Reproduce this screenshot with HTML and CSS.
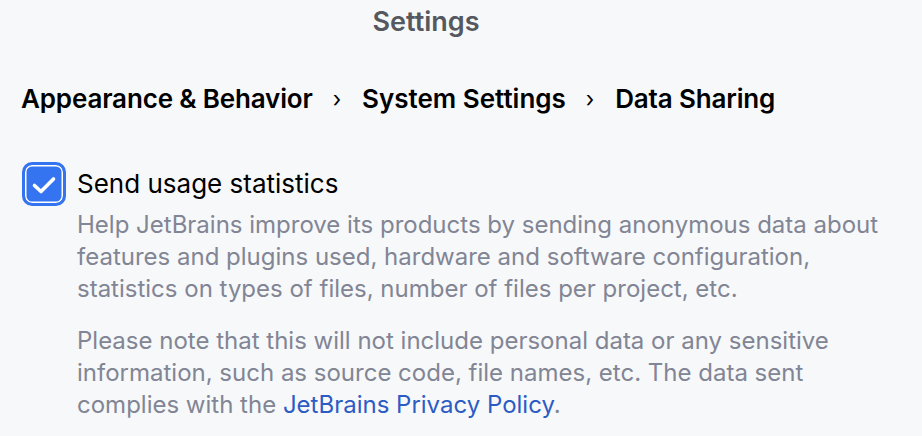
FILE: index.html
```html
<!DOCTYPE html>
<html>
<head>
<meta charset="utf-8">
<link rel="stylesheet" href="styles.css">
</head>
<body>
<div class="page">
  <header class="title">Settings</header>
  <nav class="crumbs">
    <span>Appearance &amp; Behavior</span>
    <span class="sep">›</span>
    <span class="mid">System Settings</span>
    <span class="sep">›</span>
    <span>Data Sharing</span>
  </nav>
  <div class="option">
    <div class="check">
      <svg width="38" height="38" viewBox="0 0 38 38"><path d="M9.5 20.5 L16 26.5 L28.5 14" fill="none" stroke="#fff" stroke-width="3.6" stroke-linecap="round" stroke-linejoin="round"/></svg>
    </div>
    <div class="body">
      <div class="label">Send usage statistics</div>
      <p class="desc first">Help JetBrains improve its products by sending anonymous data about<br>features and plugins used, hardware and software configuration,<br>statistics on types of files, number of files per project, etc.</p>
      <p class="desc">Please note that this will not include personal data or any sensitive<br>information, such as source code, file names, etc. The data sent<br>complies with the <a class="link" href="#">JetBrains Privacy Policy</a>.</p>
    </div>
  </div>
</div>
</body>
</html>
```
FILE: styles.css
```css
html, body {
  margin: 0;
  padding: 0;
  background: #f7f8fa;
}
body {
  font-family: Inter, "Noto Sans", sans-serif;
  width: 922px;
  height: 436px;
  overflow: hidden;
}
.page {
  display: flex;
  flex-direction: column;
}
.title {
  text-align: center;
  font-size: 27px;
  font-weight: 600;
  color: #55585e;
  line-height: 32px;
  padding-top: 6px;
  padding-right: 70px;
}
.crumbs {
  display: flex;
  align-items: center;
  margin-top: 45px;
  padding-left: 21px;
  font-size: 26px;
  font-weight: 600;
  color: #000;
  line-height: 32px;
  letter-spacing: -0.15px;
}
.crumbs .mid {
  letter-spacing: 0;
}
.sep {
  font-weight: 400;
  font-size: 22px;
  padding: 0 21px 0 20px;
}
.option {
  display: flex;
  margin-top: 47px;
  padding-left: 22px;
}
.check {
  width: 38px;
  height: 38px;
  border-radius: 10px;
  background: #3574f0;
  border: 3px solid #3574f0;
  box-shadow: inset 0 0 0 1.5px #fff;
  flex: none;
}
.check svg {
  display: block;
}
.body {
  margin-left: 11px;
}
.label {
  font-size: 26px;
  color: #000;
  line-height: 44px;
}
.desc {
  margin: 0 0 20px;
  font-size: 24px;
  line-height: 32px;
  color: #818594;
}
.desc.first {
  margin-top: 3px;
}
.link {
  color: #2d5bc4;
  text-decoration: none;
}
```
